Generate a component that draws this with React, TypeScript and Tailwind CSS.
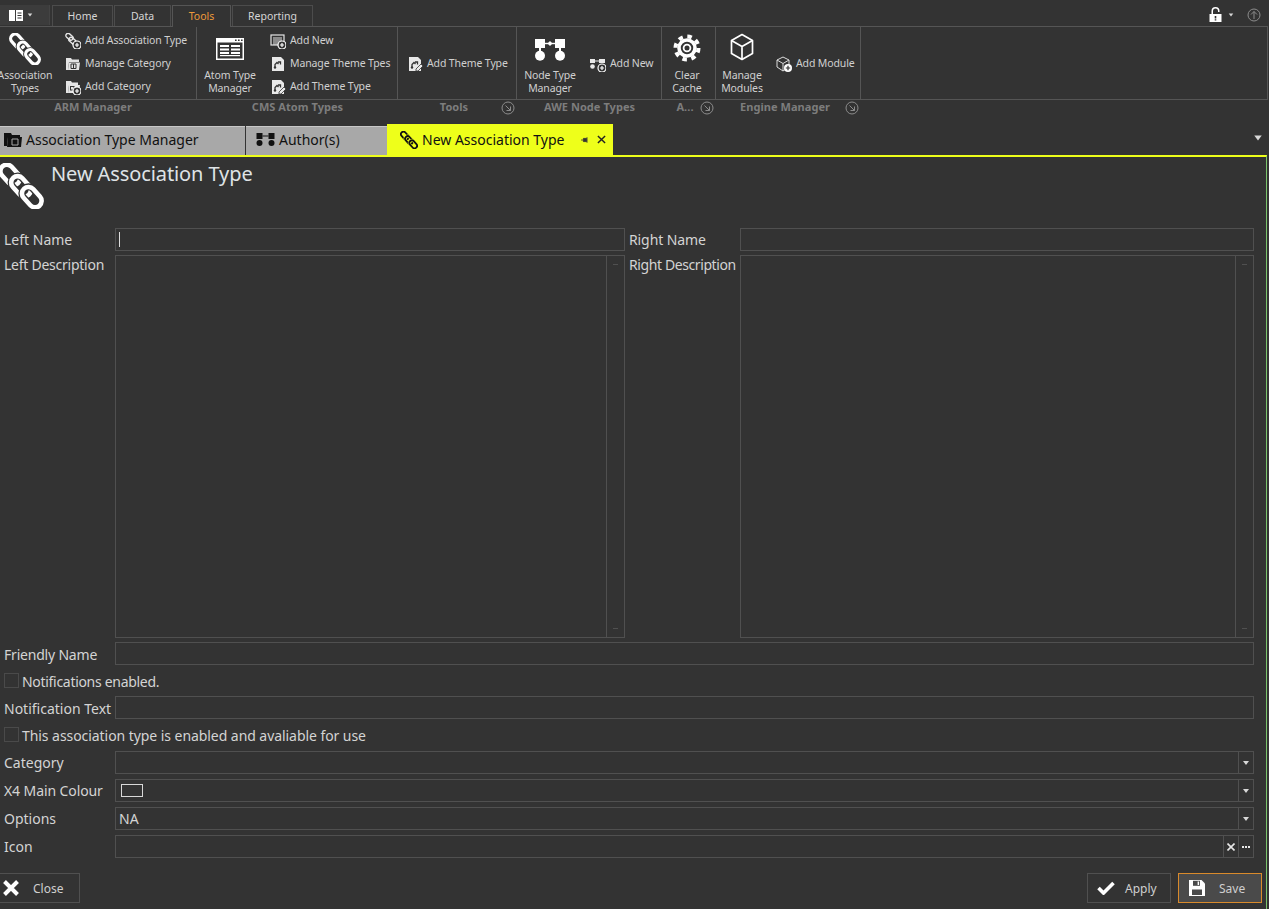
import React from 'react';

const Chain: React.FC<{ className?: string; bg?: string; color?: string }> = ({ className, bg = '#333333', color = '#ffffff' }) => (
  <svg viewBox="0 0 32 32" className={className} fill="none">
    <rect x="0.5" y="3.75" width="16" height="9" rx="4.5" transform="rotate(48 8.5 8.25)" stroke={color} strokeWidth="3.2" />
    <rect x="8" y="11.75" width="16" height="9" rx="4.5" transform="rotate(48 16 16.25)" stroke={bg} strokeWidth="5" />
    <rect x="8" y="11.75" width="16" height="9" rx="4.5" transform="rotate(48 16 16.25)" stroke={color} strokeWidth="3.2" />
    <rect x="15.5" y="19.25" width="16" height="9" rx="4.5" transform="rotate(48 23.5 23.75)" stroke={bg} strokeWidth="5" />
    <rect x="15.5" y="19.25" width="16" height="9" rx="4.5" transform="rotate(48 23.5 23.75)" stroke={color} strokeWidth="3.2" />
  </svg>
);

const PlusBadge: React.FC = () => (
  <g>
    <circle cx="12" cy="12" r="4" fill="#333333" stroke="#ffffff" strokeWidth="1.2" />
    <path d="M12 10v4M10 12h4" stroke="#ffffff" strokeWidth="1.2" />
  </g>
);

const SmallChainPlus: React.FC = () => (
  <svg viewBox="0 0 16 16" className="w-4 h-4" fill="none">
    <rect x="0.5" y="1.5" width="8" height="4.5" rx="2.2" transform="rotate(40 4.5 3.7)" stroke="#e4e4e4" strokeWidth="1.4" />
    <rect x="3.5" y="5.5" width="8" height="4.5" rx="2.2" transform="rotate(40 7.5 7.7)" stroke="#e4e4e4" strokeWidth="1.4" />
    <PlusBadge />
  </svg>
);

const FolderBox: React.FC = () => (
  <svg viewBox="0 0 16 16" className="w-4 h-4" fill="none">
    <path d="M1 2h5l1 1.5h7v2.5H4L3 14H1z" fill="#e4e4e4" />
    <path d="M4 6.5h11L14 14H3z" fill="#e4e4e4" />
    <path d="M6 8h5v4.5H6z" stroke="#333333" strokeWidth="1" />
    <path d="M8.5 8v4.5" stroke="#333333" strokeWidth="1" />
  </svg>
);

const FolderPlus: React.FC = () => (
  <svg viewBox="0 0 16 16" className="w-4 h-4" fill="none">
    <path d="M1 2h5l1 1.5h6V6H4L3 14H1z" fill="#e4e4e4" />
    <path d="M4 6h11l-1 8H3z" fill="#e4e4e4" />
    <rect x="5.5" y="7.5" width="3.5" height="3.5" stroke="#333333" strokeWidth="1" />
    <PlusBadge />
  </svg>
);

const ListPlus: React.FC = () => (
  <svg viewBox="0 0 16 16" className="w-4 h-4" fill="none">
    <rect x="1" y="2" width="13" height="10" stroke="#e4e4e4" strokeWidth="1.2" />
    <path d="M3 5h9M3 7h9M3 9h7M3 11h5" stroke="#e4e4e4" strokeWidth="1" />
    <PlusBadge />
  </svg>
);

const ThemePage: React.FC<{ pencil?: boolean }> = ({ pencil }) => (
  <svg viewBox="0 0 16 16" className="w-4 h-4" fill="none">
    <path d="M2 1h9l3 3v11H2z" fill="#e8e8e8" />
    <path d="M5 11V8.5l2-2 1.5 1.5M8 6h2.5v2.5" stroke="#333333" strokeWidth="1.3" />
    <circle cx="5" cy="11.5" r="1.2" fill="#333333" />
    {pencil && <path d="M9 13l5-5 2 2-5 5H9z" fill="#e8e8e8" stroke="#333333" strokeWidth="0.8" />}
  </svg>
);

const NodeGlyph: React.FC<{ className?: string }> = ({ className }) => (
  <svg viewBox="0 0 30 22" className={className} fill="#ffffff">
    <rect x="0" y="0" width="10" height="9" />
    <rect x="20" y="0" width="10" height="9" />
    <path d="M10 3.8h10v1.4H10z" />
    <path d="M12.5 4.5l2.5-2.5 2.5 2.5-2.5 2.5z" />
    <rect x="4" y="8" width="2" height="5" />
    <rect x="24" y="8" width="2" height="5" />
    <circle cx="5" cy="16.8" r="5" />
    <circle cx="25" cy="16.8" r="5" />
  </svg>
);

const NodePlus: React.FC = () => (
  <svg viewBox="0 0 16 16" className="w-4 h-4" fill="#e8e8e8">
    <rect x="0" y="3" width="5" height="4" />
    <rect x="9" y="3" width="6" height="4" />
    <path d="M5 4.5h4v1H5z" />
    <circle cx="2.5" cy="10.5" r="2.3" />
    <PlusBadge />
  </svg>
);

const Cube: React.FC<{ className?: string }> = ({ className }) => (
  <svg viewBox="0 0 24 28" className={className} fill="none" stroke="#ffffff" strokeWidth="1.7" strokeLinejoin="round">
    <path d="M12 1.5L22.5 7.5v13L12 26.5 1.5 20.5v-13z" />
    <path d="M1.5 7.5L12 13.5l10.5-6M12 13.5v13" />
  </svg>
);

const CubePlus: React.FC = () => (
  <svg viewBox="0 0 16 16" className="w-4 h-4" fill="none" stroke="#dcdcdc" strokeWidth="1">
    <path d="M7 1l6 3v7l-6 4-6-4V4z" />
    <path d="M1 4l6 3.5L13 4M7 7.5V15" />
    <g stroke="none"><circle cx="12" cy="12" r="4" fill="#ffffff" /><path d="M11.4 9.8h1.2v1.6h1.6v1.2h-1.6v1.6h-1.2v-1.6H9.8v-1.2h1.6z" fill="#333333" /></g>
  </svg>
);

const Gear: React.FC<{ className?: string }> = ({ className }) => (
  <svg viewBox="0 0 28 28" className={className} fill="none">
    <circle cx="14" cy="14" r="8" stroke="#ffffff" strokeWidth="3.6" />
    <circle cx="14" cy="14" r="3.4" stroke="#ffffff" strokeWidth="1.8" />
    <circle cx="14" cy="14" r="11.5" stroke="#ffffff" strokeWidth="4" strokeDasharray="4.5 4.53" />
  </svg>
);

const AtomWindow: React.FC<{ className?: string }> = ({ className }) => (
  <svg viewBox="0 0 28 22" className={className} fill="#ffffff">
    <path d="M0 0h28v22H0zM1.5 4.5V20.5h25V4.5z" fillRule="evenodd" />
    <path d="M19 1.5h1.6v1.5H19zM22 1.5h1.6v1.5H22zM25 1.5h1.6v1.5H25z" fill="#333333" />
    <path d="M4 7h9v2H4zM15 7h9v2h-9zM4 10.5h9v2H4zM15 10.5h9v2h-9zM4 14h9v2H4zM15 14h9v2h-9z" />
    <path d="M4 17h20v1.2H4z" />
  </svg>
);

const Caret: React.FC<{ className?: string }> = ({ className }) => <span className={`block w-0 h-0 border-x-[3.5px] border-x-transparent border-t-[4px] border-t-[#d8d8d8] ${className ?? ''}`} />;

const Launcher: React.FC = () => (
  <svg viewBox="0 0 14 14" className="w-[14px] h-[14px]" fill="none" stroke="#8c8c8c">
    <circle cx="7" cy="7" r="6" />
    <path d="M4.5 4.5l5 5M9.5 5.5v4h-4" />
  </svg>
);

const ribbonText = 'text-[10.5px] tracking-[-0.12px] text-[#d0d0d0] whitespace-nowrap';

const LargeButton: React.FC<{ icon: React.ReactNode; lines: string[]; className?: string; iconPad: string }> = ({ icon, lines, className, iconPad }) => (
  <div className={`flex flex-col items-center ${className ?? ''}`}>
    <div className={`h-[42px] flex items-start justify-center ${iconPad}`}>{icon}</div>
    {lines.map(line => (
      <span key={line} className={`leading-[13px] ${ribbonText}`}>{line}</span>
    ))}
  </div>
);

const SmallButton: React.FC<{ icon: React.ReactNode; label: string }> = ({ icon, label }) => (
  <div className="flex items-center h-[23px]">
    <span className="w-[20px] shrink-0">{icon}</span>
    <span className={ribbonText}>{label}</span>
  </div>
);

const RibbonGroup: React.FC<{ width: string; caption: string; captionPad?: string; launcher?: boolean; children: React.ReactNode }> = ({ width, caption, captionPad, launcher, children }) => (
  <div className={`${width} shrink-0 flex flex-col`}>
    <div className="h-[73px] border-r border-b border-[#555555] flex">{children}</div>
    <div className={`relative h-[15px] flex items-center justify-center ${captionPad ?? ''}`}>
      <span className="text-[11px] tracking-[0.05px] font-bold text-[#7d7d7d] whitespace-nowrap">{caption}</span>
      {launcher && <span className="absolute right-[2px] top-[1px]"><Launcher /></span>}
    </div>
  </div>
);

const Field: React.FC<{ children?: React.ReactNode; className?: string }> = ({ children, className }) => (
  <div className={`h-[23px] border border-[#505050] flex items-stretch ${className ?? ''}`}>{children}</div>
);

const Label: React.FC<{ text: string; className?: string }> = ({ text, className }) => (
  <span className={`text-[14px] leading-[23px] text-[#d4d4d4] whitespace-nowrap ${className ?? ''}`}>{text}</span>
);

const Row: React.FC<{ label: string; children?: React.ReactNode; className?: string; labelClass?: string }> = ({ label, children, className, labelClass }) => (
  <div className={`flex h-[23px] ${className ?? ''}`}>
    <Label text={label} className={`w-[111px] shrink-0 ${labelClass ?? ''}`} />
    <Field className="w-[1139px]">{children}</Field>
  </div>
);

const Combo: React.FC<{ children?: React.ReactNode }> = ({ children }) => (
  <>
    <div className="flex-1 flex items-center">{children}</div>
    <div className="w-[15px] border-l border-[#505050] flex items-center justify-center"><Caret /></div>
  </>
);

const Check: React.FC<{ label: string; className?: string; labelClass?: string }> = ({ label, className, labelClass }) => (
  <div className={`flex items-center h-[23px] ${className ?? ''}`}>
    <span className="w-[15px] h-[15px] border border-[#4a4a4a] mr-[3px] -mt-[1px]" />
    <Label text={label} className={`pt-px ${labelClass ?? ''}`} />
  </div>
);

const TextArea: React.FC<{ width: string }> = ({ width }) => (
  <div className={`${width} h-[383px] border border-[#505050] flex justify-end`}>
    <div className="w-[18px] border-l border-[#505050] flex flex-col justify-between items-center py-[8px]">
      <span className="w-[5px] h-[1px] bg-[#505050]" />
      <span className="w-[5px] h-[1px] bg-[#505050]" />
    </div>
  </div>
);

const FootButton: React.FC<{ icon: React.ReactNode; label: string; className?: string; textClass?: string }> = ({ icon, label, className, textClass }) => (
  <div className={`w-[84px] h-[30px] flex items-center border ${className ?? ''}`}>
    <span className="w-[30px] ml-[3px] flex justify-center shrink-0">{icon}</span>
    <span className={`pt-px text-[12px] text-[#cfcfcf] ${textClass ?? ''}`}>{label}</span>
  </div>
);

const topTab = 'h-[21px] pt-px border border-b-0 border-[#4c4c4c] flex items-center justify-center text-[10.5px] text-[#d6d6d6]';

const App: React.FC = () => {
  return (
    <div className="w-[1269px] h-[909px] overflow-hidden bg-[#333333] flex flex-col font-['Noto_Sans','Open_Sans',sans-serif]">
      <div className="h-[26px] flex items-end relative shrink-0">
        <div className="w-[50px] h-[20px] mb-[1px] bg-[#3c3c3c] border-r border-[#444444] flex items-center pl-[9px] gap-[4px]">
          <svg viewBox="0 0 14 11" className="w-[14px] h-[11px]" fill="#ffffff"><path d="M0 0h6v11H0zM7 0h7v11H7z" /><path d="M8.5 2.5h4v1h-4zM8.5 5h4v1h-4zM8.5 7.5h4v1h-4z" fill="#333333" /></svg>
          <Caret className="scale-75" />
        </div>
        <div className={`ml-[2px] w-[61px] ${topTab}`}>Home</div>
        <div className={`ml-px w-[57px] ${topTab}`}>Data</div>
        <div className="ml-px w-[59px] h-[22px] pt-px -mb-px z-10 bg-[#333333] border border-b-0 border-[#555555] flex items-center justify-center text-[10.5px] text-[#ee9a3a]">Tools</div>
        <div className={`ml-px w-[81px] ${topTab}`}>Reporting</div>
        <div className="absolute right-[8px] top-[7px] flex items-center">
          <svg viewBox="0 0 12 15" className="w-[13px] h-[15px]" fill="#ffffff">
            <path d="M2 7V4a4 4 0 0 1 8 0v1H8.5V4a2.5 2.5 0 0 0-5 0v3z" />
            <path d="M0 7h12v8H0z" />
            <path d="M5.2 9h1.6v2.5H5.2zM5.2 12.2h1.6v1.3H5.2z" fill="#333333" />
          </svg>
          <Caret className="ml-[6px] mr-[13px] scale-75" />
          <svg viewBox="0 0 14 14" className="w-[14px] h-[14px]" fill="none" stroke="#8c8c8c"><circle cx="7" cy="7" r="6" /><path d="M7 11V3.5M4 6.5l3-3 3 3" /></svg>
        </div>
      </div>

      <div className="h-[100px] shrink-0 border-t border-[#555555] flex items-start mr-px">
        <RibbonGroup width="w-[197px]" caption="ARM Manager" captionPad="pr-[11px]">
          <LargeButton className="w-[50px]" iconPad="pt-[6px]" icon={<Chain className="w-[32px] h-[32px]" />} lines={['Association', 'Types']} />
          <div className="ml-[15px] pt-[2px]">
            <SmallButton icon={<SmallChainPlus />} label="Add Association Type" />
            <SmallButton icon={<FolderBox />} label="Manage Category" />
            <SmallButton icon={<FolderPlus />} label="Add Category" />
          </div>
        </RibbonGroup>
        <RibbonGroup width="w-[201px]" caption="CMS Atom Types">
          <LargeButton className="w-[66px]" iconPad="pt-[11px]" icon={<AtomWindow className="w-[28px] h-[22px]" />} lines={['Atom Type', 'Manager']} />
          <div className="ml-[7px] pt-[2px]">
            <SmallButton icon={<ListPlus />} label="Add New" />
            <SmallButton icon={<ThemePage />} label="Manage Theme Tpes" />
            <SmallButton icon={<ThemePage pencil />} label="Add Theme Type" />
          </div>
        </RibbonGroup>
        <RibbonGroup width="w-[119px]" caption="Tools" captionPad="pr-[7px]" launcher>
          <div className="ml-[9px] pt-[25px]">
            <SmallButton icon={<ThemePage pencil />} label="Add Theme Type" />
          </div>
        </RibbonGroup>
        <RibbonGroup width="w-[145px]" caption="AWE Node Types">
          <LargeButton className="w-[66px]" iconPad="pt-[12px]" icon={<NodeGlyph className="w-[30px] h-[22px]" />} lines={['Node Type', 'Manager']} />
          <div className="ml-[7px] pt-[25px]">
            <SmallButton icon={<NodePlus />} label="Add New" />
          </div>
        </RibbonGroup>
        <RibbonGroup width="w-[54px]" caption="A..." captionPad="pr-[8px]" launcher>
          <LargeButton className="w-[50px]" iconPad="pt-[7px]" icon={<Gear className="w-[28px] h-[28px]" />} lines={['Clear', 'Cache']} />
        </RibbonGroup>
        <RibbonGroup width="w-[145px]" caption="Engine Manager" captionPad="pr-[7px]" launcher>
          <LargeButton className="w-[52px]" iconPad="pt-[6px]" icon={<Cube className="w-[24px] h-[28px]" />} lines={['Manage', 'Modules']} />
          <div className="ml-[8px] pt-[25px]">
            <SmallButton icon={<CubePlus />} label="Add Module" />
          </div>
        </RibbonGroup>
        <div className="flex-1 h-[73px] border-r border-b border-[#555555]" />
      </div>

      <div className="h-[30px] -mt-[1px] shrink-0 flex items-end relative pr-[2px]">
        <div className="w-[245px] h-[29px] pb-[3px] bg-[#a8a8a8] border-t border-[#c8c8c8] flex items-center pl-[4px] gap-[4px] text-[14px] text-[#111111]">
          <svg viewBox="0 0 18 16" className="w-[18px] h-[16px]" fill="#111111">
            <path d="M0 1h7l1 2h8v2H4L3 14H0z" />
            <path d="M4 5h14l-1 10H3z" />
            <path d="M8 7h6v6H8z" fill="none" stroke="#a8a8a8" />
          </svg>
          Association Type Manager
        </div>
        <div className="ml-px w-[141px] h-[29px] pb-[3px] bg-[#a8a8a8] border-t border-[#c8c8c8] flex items-center pl-[10px] gap-[4px] text-[14px] text-[#111111]">
          <svg viewBox="0 0 18 13" className="w-[19px] h-[13px]" fill="#111111">
            <rect x="0" y="0" width="6" height="6" /><rect x="12" y="0" width="6" height="6" /><path d="M6 2.5h6v1H6z" />
            <circle cx="3" cy="10" r="3" /><circle cx="15" cy="10" r="3" />
          </svg>
          Author(s)
        </div>
        <div className="w-[226px] h-[31px] absolute left-[387px] bottom-0 bg-[#eeff1a] flex items-center pl-[13px] text-[14px] text-[#111111]">
          <span className="mr-[4px]"><Chain className="w-[18px] h-[18px]" bg="#eeff1a" color="#111111" /></span>
          New Association Type
          <svg viewBox="0 0 10 10" className="w-[8px] h-[8px] ml-[16px]" fill="#333333" stroke="#333333"><path d="M3 3h4v4H3z" /><path d="M0 5h3M7.5 1.5v7" fill="none" /></svg>
          <svg viewBox="0 0 10 10" className="w-[9px] h-[9px] ml-[8px]" fill="none" stroke="#222222" strokeWidth="1.6"><path d="M1 1l8 8M9 1l-8 8" /></svg>
        </div>
        <Caret className="absolute right-[8px] top-[11px] scale-125" />
      </div>

      <div className="flex-1 min-h-0 mr-[2px] border-t-[2px] border-t-[#eeff1a] border-r border-r-[#7bc46c] flex flex-col pl-[4px]">
        <div className="h-[71px] shrink-0 flex -ml-[6px]">
          <Chain className="w-[46px] h-[46px] mt-[6px] shrink-0" />
          <span className="ml-[7px] mt-[3px] text-[20px] tracking-[-0.1px] leading-[28px] text-[#dfe3e6]">New Association Type</span>
        </div>

        <div className="grid grid-cols-[111px_510px_115px_514px] gap-y-[4px] shrink-0">
          <Label text="Left Name" />
          <Field>
            <span className="w-px h-[15px] bg-[#dddddd] ml-[3px] mt-[3px]" />
          </Field>
          <Label text="Right Name" className="pl-[4px] tracking-[-0.1px]" />
          <Field />
          <Label text="Left Description" className="self-start -mt-[2px] tracking-[-0.25px]" />
          <TextArea width="w-[510px]" />
          <Label text="Right Description" className="pl-[4px] self-start -mt-[2px] tracking-[-0.4px]" />
          <TextArea width="w-[514px]" />
        </div>

        <Row label="Friendly Name" className="mt-[4px]" labelClass="pt-px tracking-[-0.2px]" />
        <Check label="Notifications enabled." className="mt-[4px]" labelClass="tracking-[-0.3px]" />
        <Row label="Notification Text" className="mt-[4px]" labelClass="pt-px" />
        <Check label="This association type is enabled and avaliable for use" className="mt-[4px]" labelClass="tracking-[-0.06px]" />
        <Row label="Category" className="mt-[5px]"><Combo /></Row>
        <Row label="X4 Main Colour" className="mt-[5px]" labelClass="tracking-[-0.1px]">
          <Combo><span className="w-[22px] h-[13px] border border-[#d8d8d8] ml-[5px]" /></Combo>
        </Row>
        <Row label="Options" className="mt-[5px]">
          <Combo><span className="ml-[3px] text-[14px] text-[#d4d4d4]">NA</span></Combo>
        </Row>
        <Row label="Icon" className="mt-[5px]">
          <div className="flex-1" />
          <div className="w-[15px] border-l border-[#505050] flex items-center justify-center">
            <svg viewBox="0 0 8 8" className="w-[8px] h-[8px]" fill="none" stroke="#e8e8e8" strokeWidth="1.6"><path d="M0.5 0.5l7 7M7.5 0.5l-7 7" /></svg>
          </div>
          <div className="w-[15px] border-l border-[#505050] flex items-center justify-center gap-[1px]">
            <span className="w-[2px] h-[2px] bg-[#e8e8e8]" /><span className="w-[2px] h-[2px] bg-[#e8e8e8]" /><span className="w-[2px] h-[2px] bg-[#e8e8e8]" />
          </div>
        </Row>

        <div className="flex items-center mt-[15px] -ml-[5px] pr-[4px]">
          <div className="w-[81px] h-[30px] flex items-center border border-[#505050] pl-[2px]">
            <svg viewBox="0 0 18 18" className="w-[18px] h-[18px]" fill="none" stroke="#ffffff" strokeWidth="4"><path d="M2.5 2.5l13 13M15.5 2.5l-13 13" /></svg>
            <span className="ml-[13px] pt-px text-[12px] text-[#cfcfcf]">Close</span>
          </div>
          <div className="flex-1" />
          <FootButton
            className="border-[#505050]"
            textClass="ml-[4px]"
            icon={<svg viewBox="0 0 18 14" className="w-[18px] h-[14px]" fill="none" stroke="#ffffff" strokeWidth="3.6"><path d="M1.5 7l5 5L16.5 2" /></svg>}
            label="Apply"
          />
          <FootButton
            className="ml-[7px] border-[#d98a2b] bg-[#4a4a4a]"
            textClass="ml-[7px]"
            icon={<svg viewBox="0 0 16 16" className="w-[16px] h-[16px]" fill="#ffffff"><path d="M0 0h12.5L16 3.5V16H0z" /><path d="M4 0.8h7v5H4z" fill="#4a4a4a" /><path d="M8.6 1.5h1.5v3.5H8.6z" /><path d="M3 9.5h10V15H3z" fill="#4a4a4a" /></svg>}
            label="Save"
          />
        </div>
      </div>
    </div>
  );
};

export default App;
